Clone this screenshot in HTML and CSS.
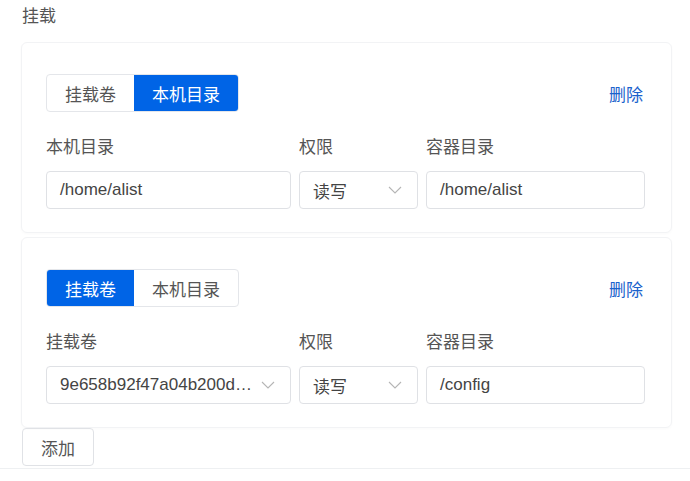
FILE: index.html
```html
<!DOCTYPE html>
<html lang="zh">
<head>
<meta charset="utf-8">
<link rel="stylesheet" href="styles.css">
</head>
<body>
<div class="page">
  <div class="title">挂载</div>
  <div class="card">
    <div class="head">
      <div class="seg">
        <span class="seg-item">挂载卷</span>
        <span class="seg-item active">本机目录</span>
      </div>
      <span class="del">删除</span>
    </div>
    <div class="grid">
      <div class="label">本机目录</div>
      <div class="label">权限</div>
      <div class="label">容器目录</div>
      <div class="input">/home/alist</div>
      <div class="input select"><span class="val">读写</span><svg class="chev" width="14" height="8" viewBox="0 0 14 8"><path d="M1 1l6 6 6-6" fill="none" stroke="#b5b5b5" stroke-width="1.1"/></svg></div>
      <div class="input">/home/alist</div>
    </div>
  </div>
  <div class="card">
    <div class="head">
      <div class="seg">
        <span class="seg-item active">挂载卷</span>
        <span class="seg-item">本机目录</span>
      </div>
      <span class="del">删除</span>
    </div>
    <div class="grid">
      <div class="label">挂载卷</div>
      <div class="label">权限</div>
      <div class="label">容器目录</div>
      <div class="input select"><span class="val">9e658b92f47a04b200d…</span><svg class="chev" width="14" height="8" viewBox="0 0 14 8"><path d="M1 1l6 6 6-6" fill="none" stroke="#b5b5b5" stroke-width="1.1"/></svg></div>
      <div class="input select"><span class="val">读写</span><svg class="chev" width="14" height="8" viewBox="0 0 14 8"><path d="M1 1l6 6 6-6" fill="none" stroke="#b5b5b5" stroke-width="1.1"/></svg></div>
      <div class="input">/config</div>
    </div>
  </div>
  <div class="btn">添加</div>
</div>
<div class="rule"></div>
</body>
</html>
```
FILE: styles.css
```css
html, body {
  margin: 0;
  background: #fff;
}
body {
  font-family: "Liberation Sans", "Noto Sans CJK SC", sans-serif;
  font-size: 17px;
  color: #444;
}
.page {
  padding: 4px 19px 0 21px;
}
.title {
  padding-left: 1px;
  line-height: 26px;
  margin-bottom: 12px;
  color: #555;
}
.card {
  width: 651px;
  box-sizing: border-box;
  border: 1px solid #f2f3f5;
  border-radius: 6px;
  box-shadow: 0 1px 3px rgba(0, 0, 0, 0.025);
  padding: 31px 26px 23px 24px;
  margin-bottom: 4px;
}
.card + .card {
  margin-bottom: 0;
}
.head {
  display: flex;
  align-items: center;
  justify-content: space-between;
  padding-right: 2px;
  margin-bottom: 24px;
}
.seg {
  display: flex;
  height: 38px;
  border: 1px solid #e4e6ea;
  border-radius: 4px;
  box-sizing: border-box;
  overflow: hidden;
}
.seg-item {
  display: flex;
  align-items: center;
  padding: 0 18px;
  color: #555;
}
.seg-item.active {
  background: #0064e6;
  color: #fff;
}
.del {
  color: #1a62cc;
}
.grid {
  display: grid;
  grid-template-columns: 245px 119px 1fr;
  column-gap: 8px;
}
.label {
  line-height: 24px;
  margin-bottom: 11px;
  color: #555;
}
.input {
  height: 38px;
  box-sizing: border-box;
  border: 1px solid #dfe1e5;
  border-radius: 4px;
  padding: 0 13px;
  display: flex;
  align-items: center;
  color: #444;
  min-width: 0;
  white-space: nowrap;
}
.select {
  justify-content: space-between;
}
.val {
  min-width: 0;
}
.chev {
  flex: none;
  margin-right: 2px;
}
.btn {
  display: inline-flex;
  align-items: center;
  height: 38px;
  box-sizing: border-box;
  padding: 0 18px;
  border: 1px solid #e0e2e6;
  border-radius: 4px;
  color: #555;
  margin-left: 1px;
}
.rule {
  height: 1px;
  background: #eef0f2;
  margin-top: 2px;
}
```
